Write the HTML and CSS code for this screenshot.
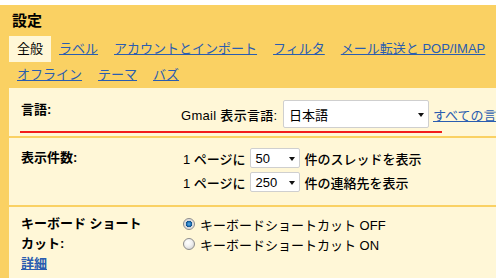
FILE: index.html
```html
<!DOCTYPE html>
<html lang="ja">
<head>
	<meta charset="UTF-8">
	<title>設定</title>
	<link rel="stylesheet" href="styles.css">
</head>
<body>
	<div class="frame">
		<div class="title">設定</div>

		<div class="tabs">
			<span class="tab active">全般</span>
			<a class="tab" href="#">ラベル</a>
			<a class="tab" href="#">アカウントとインポート</a>
			<a class="tab" href="#">フィルタ</a>
			<a class="tab" href="#">メール転送と POP/IMAP</a>
		</div>
		<div class="tabs">
			<a class="tab" href="#">オフライン</a>
			<a class="tab" href="#">テーマ</a>
			<a class="tab" href="#">バズ</a>
		</div>

		<div class="panel">
			<div class="section lang">
				<div class="label">言語:</div>
				<div class="field">
					<span class="caption">Gmail 表示言語:</span>
					<span class="select wide">日本語<i class="caret"></i></span>
					<a class="more" href="#">すべての言語で Gmail を表示</a>
				</div>
				<div class="redline"></div>
			</div>

			<div class="section count">
				<div class="label">表示件数:</div>
				<div class="rows">
					<div class="line">
						<span class="caption">1 ページに</span>
						<span class="select small">50<i class="caret"></i></span>
						<span class="caption">件のスレッドを表示</span>
					</div>
					<div class="line">
						<span class="caption">1 ページに</span>
						<span class="select small">250<i class="caret"></i></span>
						<span class="caption">件の連絡先を表示</span>
					</div>
				</div>
			</div>

			<div class="section keys">
				<div class="label">キーボード ショート<br>カット:<br><a href="#">詳細</a></div>
				<div class="rows">
					<div class="line"><span class="radio on"></span>キーボードショートカット OFF</div>
					<div class="line"><span class="radio"></span>キーボードショートカット ON</div>
				</div>
			</div>
		</div>
	</div>
</body>
</html>
```

FILE: styles.css
```css
html, body { margin: 0; padding: 0; overflow: hidden; }
body { font-family: "Liberation Sans", "Noto Sans CJK JP", sans-serif; font-size: 13px; color: #000; background: #fff; }
a { color: #2a5db0; }

.frame { margin-top: 5px; background: #fad163; padding-left: 9px; height: 273px; }
.title { font-size: 15px; font-weight: bold; line-height: 31px; padding-left: 3px; }

.tabs { display: flex; height: 26px; line-height: 26px; white-space: nowrap; }
.tab { padding: 0 8px; }
.tab.active { background: #fff7d7; color: #000; }

.panel { background: #fff7d7; height: 190px; white-space: nowrap; }
.section { display: grid; grid-template-columns: 160px auto; padding-left: 12px; border-bottom: 2px solid #fad163; }
.label { font-weight: bold; line-height: 20px; }
.caption { font-weight: 500; }

.lang { padding: 12px 0 3px 12px; }
.lang .label { margin-top: 0; }
.field { display: flex; align-items: center; height: 28px; }
.field .caption { width: 100px; margin-right: 2px; letter-spacing: 0.3px; }
.more { margin-left: 4px; }
.redline { grid-column: 1 / -1; height: 2px; width: 422px; margin: 3px 0 0 -1px; background: #f21c1c; }

.select { display: flex; align-items: center; justify-content: space-between; box-sizing: border-box; background: #fff; border: 1px solid #cfcfcf; border-radius: 2px; padding: 0 4px 0 5px; }
.select.wide { width: 146px; height: 28px; }
.select.small { width: 50px; height: 20px; margin: 0 5px 0 4px; }
.caret { width: 0; height: 0; border-top: 4px solid #111; border-left: 3.5px solid transparent; border-right: 3.5px solid transparent; margin-top: 1px; }

.count { padding-top: 10px; padding-bottom: 13px; }
.rows { display: flex; flex-direction: column; gap: 4px; }
.line { display: flex; align-items: center; height: 20px; padding-left: 2px; }

.keys { padding-top: 7px; border-bottom: 0; }
.keys .rows { gap: 0; }
.radio { width: 10px; height: 10px; border: 1px solid #8c8c8c; border-radius: 50%; margin-right: 5px; background: radial-gradient(circle at 40% 35%, #fff 0, #f2f2f2 40%, #c9c9c9 100%); }
.radio.on { background: radial-gradient(circle, #5fb0e6 0, #1c6fb4 30%, #0e4c86 42%, #d8d8d8 50%, #f4f4f4 100%); }
```
